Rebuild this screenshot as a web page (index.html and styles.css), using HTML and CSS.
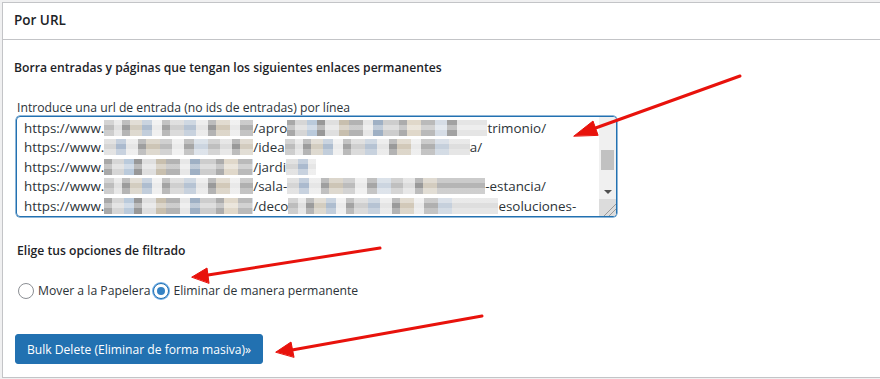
FILE: index.html
```html
<!DOCTYPE html>
<html lang="es">
  <head>
    <meta charset="UTF-8" />
    <meta name="viewport" content="width=device-width, initial-scale=1.0" />
    <title>Bulk Delete - Por URL</title>
    <link rel="stylesheet" href="styles.css">
  </head>
  <body>
    <div class="postbox">
      <h2 class="postbox-title">Por URL</h2>

      <div class="inside">
        <h4 class="intro">Borra entradas y páginas que tengan los siguientes enlaces permanentes</h4>

        <label class="url-label">Introduce una url de entrada (no ids de entradas) por línea</label>
        <div class="url-box">
          <div class="url-lines">
            <div>https://www.<span class="blur b1" style="width:149px"></span>/apro<span class="blur b2" style="width:200px"></span>trimonio/</div>
            <div>https://www.<span class="blur b3" style="width:149px"></span>/idea<span class="blur b1" style="width:185px"></span>a/</div>
            <div>https://www.<span class="blur b2" style="width:149px"></span>/jardi<span class="blur b3" style="width:30px"></span></div>
            <div>https://www.<span class="blur b1" style="width:149px"></span>/sala-<span class="blur b3" style="width:198px"></span>-estancia/</div>
            <div>https://www.<span class="blur b2" style="width:149px"></span>/deco<span class="blur b1" style="width:210px"></span>esoluciones-</div>
          </div>
          <div class="scrollbar">
            <div class="track"><div class="thumb"></div></div>
            <div class="arrow-down"></div>
            <div class="grip"></div>
          </div>
        </div>

        <h4 class="filter-title">Elige tus opciones de filtrado</h4>

        <div class="radios">
          <label class="radio"><span class="dot"></span>Mover a la Papelera</label>
          <label class="radio"><span class="dot checked"></span>Eliminar de manera permanente</label>
        </div>

        <button type="button" class="button-primary">Bulk Delete (Eliminar de forma masiva)»</button>
      </div>
    </div>

    <svg class="arrows" width="880" height="379" viewBox="0 0 880 379">
      <g stroke="#e8120c" stroke-width="3" stroke-linecap="round" fill="#e8120c">
        <line x1="740" y1="76" x2="590" y2="130" />
        <polygon points="574,136 593,121 598,135" stroke-width="1" />
        <line x1="380" y1="248" x2="208" y2="275" />
        <polygon points="192,277 207,268 209,283" stroke-width="1" />
        <line x1="482" y1="316" x2="292" y2="350" />
        <polygon points="276,352 291,342 294,357" stroke-width="1" />
      </g>
    </svg>
  </body>
</html>
```

FILE: styles.css
```css
body {
  margin: 0;
  background: #f0f0f1;
  font-family: "Open Sans", "Noto Sans", sans-serif;
  color: #2c3338;
  overflow: hidden;
  height: 379px;
  position: relative;
}
.postbox {
  margin: 2px 0 0 2px;
  width: 920px;
  background: #fff;
  border: 1px solid #c3c4c7;
  box-sizing: border-box;
  height: 376px;
}
.postbox-title {
  margin: 0;
  height: 36px;
  line-height: 35px;
  padding: 0 11px;
  font-size: 13.5px;
  font-weight: 600;
  color: #1d2327;
  border-bottom: 1px solid #c3c4c7;
}
.inside {
  padding: 19px 11px 0 11px;
}
.intro,
.filter-title {
  margin: 0;
  font-size: 12.15px;
  font-weight: 600;
  color: #1d2327;
}
.url-label {
  display: block;
  margin-top: 23px;
  margin-left: 3px;
  font-size: 12.2px;
  line-height: 17px;
}
.url-box {
  display: flex;
  width: 601px;
  height: 101px;
  margin: 0 0 0 2px;
  border: 1px solid #2271b1;
  border-radius: 4px;
  box-sizing: border-box;
  overflow: hidden;
  box-shadow: 0 0 0 0.5px #2271b1;
}
.url-lines {
  flex: 1;
  padding: 2px 0 0 7px;
  font-size: 13.4px;
  line-height: 19.4px;
  white-space: nowrap;
  overflow: hidden;
}
.blur {
  display: inline-block;
  height: 16px;
  vertical-align: -3px;
}
.b1 {
  background:
    linear-gradient(180deg, rgba(255,255,255,0.35) 0 5px, transparent 5px 10px, rgba(255,255,255,0.25) 10px),
    linear-gradient(90deg, #bdbdbd 0 10px, #e0e0e0 10px 18px, #9c9c9c 18px 26px, #d3cdc0 26px 38px, #aebdcf 38px 48px, #ebebeb 48px 58px, #a3a3a3 58px 66px, #cfcfcf 66px 80px, #b6c3d3 80px 92px, #e5e5e5 92px 104px, #9a9a9a 104px 112px, #d2c9b9 112px 126px, #e9e9e9 126px 136px, #b0b0b0 136px 150px, #c6d0dc 150px 164px, #dedede 164px);
}
.b2 {
  background:
    linear-gradient(180deg, transparent 0 5px, rgba(255,255,255,0.35) 5px 10px, transparent 10px),
    linear-gradient(90deg, #a8a8a8 0 8px, #d6d6d6 8px 20px, #bacadb 20px 30px, #989898 30px 38px, #dfdfdf 38px 52px, #c8bfae 52px 62px, #b3b3b3 62px 76px, #e7e7e7 76px 86px, #9fb0c4 86px 96px, #cdcdcd 96px 112px, #acacac 112px 120px, #e0d8ca 120px 134px, #bababa 134px 148px, #d6dde6 148px 160px, #a2a2a2 160px 170px, #e5e5e5 170px);
}
.b3 {
  background:
    linear-gradient(180deg, rgba(255,255,255,0.3) 0 5px, transparent 5px 10px, rgba(255,255,255,0.35) 10px),
    linear-gradient(90deg, #d5d5d5 0 12px, #abbace 12px 22px, #e6e6e6 22px 34px, #9f9f9f 34px 42px, #cdc5b6 42px 56px, #bcbcbc 56px 68px, #eaeaea 68px 80px, #a6a6a6 80px 90px, #ccd5e0 90px 104px, #bfbfbf 104px 116px, #dcdcdc 116px 128px, #999999 128px 136px, #d3ccbf 136px 150px, #b5b5b5 150px);
}
.scrollbar {
  width: 17px;
  display: flex;
  flex-direction: column;
  background: #f0f0f0;
}
.track {
  flex: 1;
}
.thumb {
  margin: 33px 2px 0 2px;
  height: 20px;
  background: #c1c1c1;
}
.arrow-down {
  height: 14px;
  display: flex;
  align-items: center;
  justify-content: center;
}
.arrow-down::before {
  content: "";
  border-left: 4px solid transparent;
  border-right: 4px solid transparent;
  border-top: 4px solid #505050;
}
.grip {
  height: 17px;
  background:
    linear-gradient(135deg, transparent 0 62%, #999 62% 66%, transparent 66% 78%, #999 78% 82%, transparent 82%),
    #dcdcdc;
}
.filter-title {
  margin-top: 25px;
  margin-left: 3px;
}
.radios {
  display: flex;
  align-items: center;
  margin-top: 23px;
  margin-left: 4px;
  font-size: 12.2px;
}
.radio {
  display: flex;
  align-items: center;
  margin-right: 3px;
}
.dot {
  width: 14px;
  height: 14px;
  border: 1px solid #8c8f94;
  border-radius: 50%;
  margin-right: 4px;
  display: flex;
  align-items: center;
  justify-content: center;
  background: #fff;
}
.dot.checked {
  border-color: #2271b1;
  box-shadow: 0 0 0 1px #72aee6;
}
.dot.checked::before {
  content: "";
  width: 8px;
  height: 8px;
  border-radius: 50%;
  background: #3582c4;
}
.button-primary {
  display: block;
  margin-top: 35px;
  margin-left: 1px;
  height: 30px;
  padding: 0 11px;
  background: #2271b1;
  color: #fff;
  border: 1px solid #2271b1;
  border-radius: 3px;
  font-family: "Open Sans", "Noto Sans", sans-serif;
  font-size: 12.1px;
  cursor: pointer;
}
.arrows {
  position: absolute;
  left: 0;
  top: 0;
  pointer-events: none;
}
```
